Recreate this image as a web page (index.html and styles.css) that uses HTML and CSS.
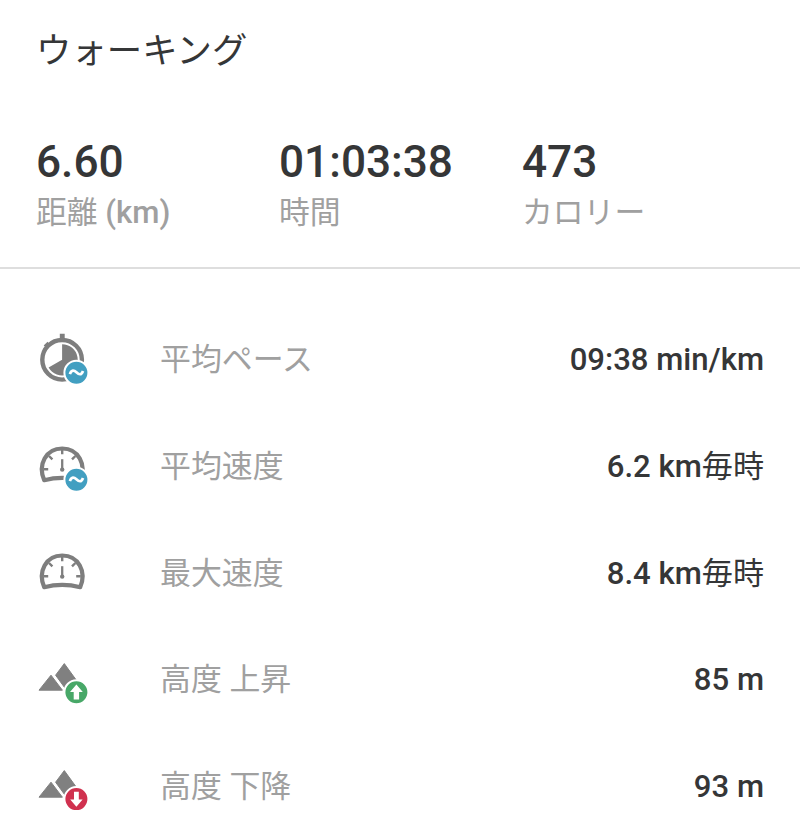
FILE: index.html
```html
<!DOCTYPE html>
<html lang="ja">
<head>
<meta charset="utf-8">
<title>ウォーキング</title>
<link rel="stylesheet" href="styles.css">
</head>
<body>
<svg class="defs" width="0" height="0">
  <defs>
    <g id="gauge" fill="none" stroke="#7e7e7e">
      <path d="M9.2 43.2C2.5 27.5 11 11.5 27.2 11.5S51.9 27.5 45.2 43.2Q27.2 38.6 9.2 43.2z" stroke-width="4.2" stroke-linejoin="round"/>
      <path d="M27.2 12v5.2M8.6 32.2h4.6M45.8 32.2h-4.6M14 19l3.4 3.4M40.4 19L37 22.4" stroke-width="2.4"/>
      <path d="M27.2 22.2v10" stroke-width="2.3"/>
      <circle cx="27.2" cy="32.6" r="2.2" fill="#7e7e7e" stroke="none"/>
    </g>
    <g id="average">
      <circle cx="41.4" cy="42.7" r="12" fill="#429fc1" stroke="#fff" stroke-width="2"/>
      <path d="M34.9 44.1C36.5 39.3 39.2 40.2 41.4 42.3C43.7 44.5 46.4 45.7 48 41" fill="none" stroke="#fff" stroke-width="2.7"/>
    </g>
    <g id="hills" fill="#808080" stroke="#808080" stroke-linejoin="round">
      <path d="M29.3 13.6L43.4 33V40H31.4L20.6 25.2z" stroke-width="1"/>
      <path d="M16 25.2L27.4 40.2H4z" stroke-width="1"/>
    </g>
  </defs>
</svg>
<header class="summary">
  <h1 class="title">ウォーキング</h1>
  <div class="stats">
    <div class="stat"><div class="num">6.60</div><div class="cap">距離 <span class="unit">(km)</span></div></div>
    <div class="stat"><div class="num">01:03:38</div><div class="cap">時間</div></div>
    <div class="stat"><div class="num">473</div><div class="cap">カロリー</div></div>
  </div>
</header>
<main class="list">
  <div class="row">
    <svg class="icon" viewBox="0 0 60 60">
      <circle cx="27.1" cy="29.8" r="19.8" fill="none" stroke="#7e7e7e" stroke-width="4.4"/>
      <path d="M24.8 3.8h4.9V9h-4.9zM8.7 15.6l3.8-3.8 3 3-3.8 3.8z" fill="#7e7e7e"/>
      <path d="M27.1 29.8V14.2A15.6 15.6 0 1 1 13.6 37.6z" fill="#7e7e7e"/>
      <use href="#average"/>
    </svg>
    <span class="label">平均ペース</span><span class="value">09:38 min/km</span>
  </div>
  <div class="row">
    <svg class="icon" viewBox="0 0 60 60"><use href="#gauge"/><use href="#average"/></svg>
    <span class="label">平均速度</span><span class="value">6.2 km<span class="cjk">毎時</span></span>
  </div>
  <div class="row">
    <svg class="icon" viewBox="0 0 60 60"><use href="#gauge"/></svg>
    <span class="label">最大速度</span><span class="value">8.4 km<span class="cjk">毎時</span></span>
  </div>
  <div class="row">
    <svg class="icon" viewBox="0 0 60 60"><use href="#hills"/>
      <circle cx="41.4" cy="42.3" r="12" fill="#48a868" stroke="#fff" stroke-width="2"/>
      <path d="M41.4 34.6l6.4 7.4h-3.7v7.6h-5.4V42H35z" fill="#fff"/>
    </svg>
    <span class="label">高度 上昇</span><span class="value">85 m</span>
  </div>
  <div class="row">
    <svg class="icon" viewBox="0 0 60 60"><use href="#hills"/>
      <circle cx="41.4" cy="42.1" r="12" fill="#d0314f" stroke="#fff" stroke-width="2"/>
      <path d="M41.4 49.8l6.2-7.2h-3.8v-7.9H39v7.9h-3.8z" fill="#fff"/>
    </svg>
    <span class="label">高度 下降</span><span class="value">93 m</span>
  </div>
</main>
</body>
</html>
```
FILE: styles.css
```css
* { box-sizing: border-box; }
body { margin: 0; background: #fff; color: #353637; font-family: Roboto, "Noto Sans CJK JP", sans-serif; overflow: hidden; }
.defs { display: block; }
.summary { height: 269px; padding: 26px 36px 0; border-bottom: 2px solid #dedede; }
.title { margin: 0; font-size: 35.4px; font-weight: 400; line-height: 50px; }
.stats { display: grid; grid-template-columns: repeat(3, 243px); margin-top: 60px; }
.num { font-size: 44.2px; font-weight: 500; line-height: 52px; }
.cap { margin-top: 2px; font-size: 30.8px; line-height: 46px; color: #a0a0a0; white-space: nowrap; }
.unit { font-weight: 500; font-size: 31.2px; }
.list { padding: 38px 36px 0 35px; }
.row { display: flex; align-items: center; height: 106.7px; }
.icon { width: 60px; height: 60px; flex: none; margin-right: 65px; }
.label { flex: 1; font-size: 30.9px; line-height: 46px; color: #a0a0a0; }
.value { font-size: 31.1px; font-weight: 500; line-height: 46px; }
.cjk { font-weight: 400; }
```
